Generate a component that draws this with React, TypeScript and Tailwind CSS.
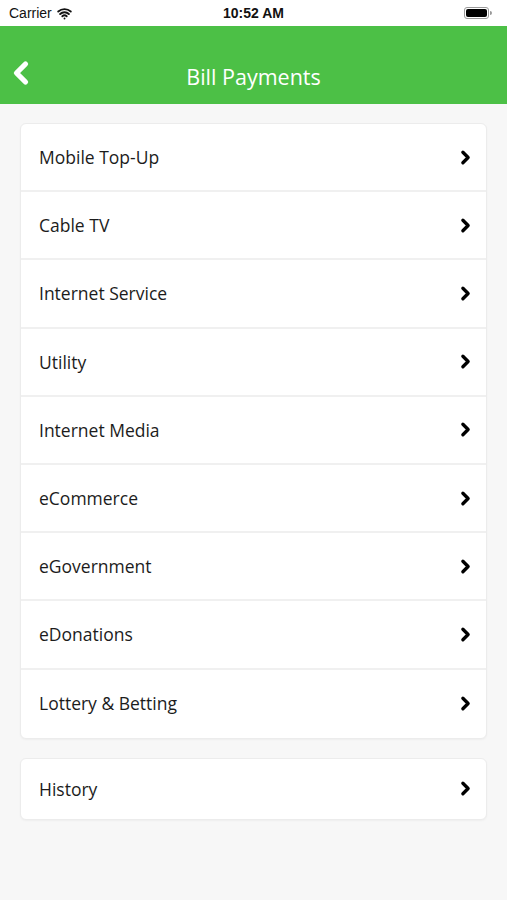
import { ChevronRight, ChevronLeft, Wifi } from 'lucide-react'

const items = [
  'Mobile Top-Up',
  'Cable TV',
  'Internet Service',
  'Utility',
  'Internet Media',
  'eCommerce',
  'eGovernment',
  'eDonations',
  'Lottery & Betting',
]

function Row({ label, last }: { label: string; last?: boolean }) {
  return (
    <div
      className={`flex items-center justify-between pl-[18px] pr-[10px] h-[68.2px] ${
        last ? '' : 'border-b-2 border-[#f0f0f0]'
      }`}
    >
      <span className="text-[17.5px] text-[#1c1c1c]">{label}</span>
      <ChevronRight size={21} strokeWidth={3.8} className="text-black" />
    </div>
  )
}

export default function App() {
  return (
    <div
      className="w-[507px] h-[900px] bg-[#f7f7f7] flex flex-col"
      style={{ fontFamily: '"Open Sans", "Noto Sans", sans-serif' }}
    >
      {/* status bar */}
      <div className="h-[26px] bg-white flex items-center justify-between px-[9px] relative">
        <div className="flex items-center gap-[5px] text-[14px] text-[#111]" style={{ fontFamily: '"Liberation Sans", sans-serif' }}>
          <span>Carrier</span>
          <Wifi size={15} strokeWidth={3} />
        </div>
        <span
          className="absolute left-1/2 -translate-x-1/2 text-[14px] font-bold text-[#111]"
          style={{ fontFamily: '"Liberation Sans", sans-serif' }}
        >
          10:52 AM
        </span>
        <div className="flex items-center gap-[1px] mr-[6px]">
          <div className="w-[25px] h-[12px] rounded-[3px] border border-[#999] p-[1px]">
            <div className="w-full h-full bg-black rounded-[2px]" />
          </div>
          <div className="w-[2px] h-[4px] bg-[#999] rounded-r" />
        </div>
      </div>

      {/* header */}
      <div className="h-[78px] bg-[#4cc046] flex items-center relative">
        <ChevronLeft size={36} strokeWidth={3.5} className="text-white absolute left-[3px] top-[29px]" />
        <span className="w-full text-center text-white text-[21.5px] mt-[24px]">Bill Payments</span>
      </div>

      <div className="px-[20px] pt-[19px] flex flex-col gap-[19px]">
        <div className="bg-white rounded-[6px] border border-[#ececec] shadow-[0_1px_2px_rgba(0,0,0,0.04)] overflow-hidden">
          {items.map((item, i) => (
            <Row key={item} label={item} last={i === items.length - 1} />
          ))}
        </div>

        <div className="bg-white rounded-[6px] border border-[#ececec] shadow-[0_1px_2px_rgba(0,0,0,0.04)] h-[62px] flex items-center justify-between pl-[18px] pr-[10px]">
          <span className="text-[17.5px] text-[#1c1c1c]">History</span>
          <ChevronRight size={21} strokeWidth={3.8} className="text-black" />
        </div>
      </div>
    </div>
  )
}
